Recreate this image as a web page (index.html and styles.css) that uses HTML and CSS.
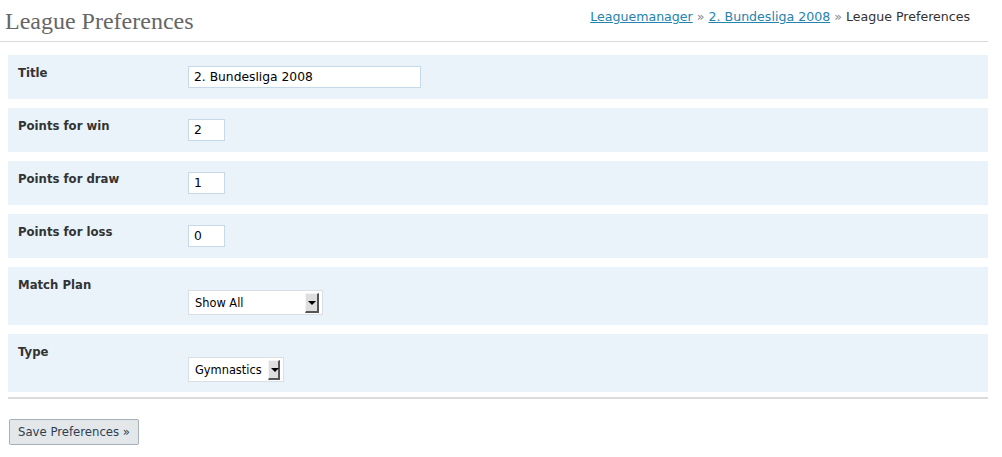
FILE: index.html
```html
<!DOCTYPE html>
<html>
<head>
<meta charset="utf-8">
<link rel="stylesheet" href="styles.css">
</head>
<body>
<div class="wrap">
  <div class="header">
    <h2 class="title">League Preferences</h2>
    <p class="crumbs"><a href="#">Leaguemanager</a> <span class="sep">»</span> <a href="#">2. Bundesliga 2008</a> <span class="sep">»</span> League Preferences</p>
  </div>
  <div class="form">
    <div class="row">
      <div class="label">Title</div>
      <div class="field"><input class="text wide" type="text" value="2. Bundesliga 2008"></div>
    </div>
    <div class="row">
      <div class="label">Points for win</div>
      <div class="field"><input class="text small" type="text" value="2"></div>
    </div>
    <div class="row">
      <div class="label">Points for draw</div>
      <div class="field"><input class="text small" type="text" value="1"></div>
    </div>
    <div class="row">
      <div class="label">Points for loss</div>
      <div class="field"><input class="text small" type="text" value="0"></div>
    </div>
    <div class="row">
      <div class="label">Match Plan</div>
      <div class="field"><div class="select plan"><span class="val">Show All</span><span class="arrow"></span></div></div>
    </div>
    <div class="row">
      <div class="label">Type</div>
      <div class="field"><div class="select type"><span class="val">Gymnastics</span><span class="arrow"></span></div></div>
    </div>
  </div>
  <div class="submit">
    <button class="btn" type="button">Save Preferences »</button>
  </div>
</div>
</body>
</html>
```
FILE: styles.css
```css
* { box-sizing: border-box; }
body {
  margin: 0;
  background: #fff;
  font-family: "DejaVu Sans", Verdana, sans-serif;
  color: #333;
}
.wrap { width: 990px; }
.header {
  display: flex;
  justify-content: space-between;
  align-items: center;
  height: 42px;
  border-bottom: 1px solid #dadada;
  padding: 0 18px 0 5px;
  margin-right: 2px;
}
.title {
  margin: 0;
  font-family: "Liberation Serif", "Times New Roman", serif;
  font-weight: normal;
  font-size: 24px;
  color: #666;
  padding-top: 1px;
}
.crumbs {
  margin: 0;
  font-size: 12.6px;
  color: #333;
  padding-bottom: 8px;
}
.crumbs a { color: #2583ad; }
.sep { color: #888; }
.form {
  display: flex;
  flex-direction: column;
  gap: 9px;
  margin: 13px 2px 0 8px;
  padding-bottom: 5px;
  border-bottom: 2px solid #dcdcdc;
}
.row {
  display: grid;
  grid-template-columns: 180px 1fr;
  background: #eaf3fa;
  padding: 10px 0;
}
.label {
  padding-left: 10px;
  padding-top: 1px;
  font-weight: bold;
  font-size: 11.7px;
  color: #333;
  line-height: 14px;
}
.field { min-height: 24px; }
.text {
  display: block;
  margin-top: 1px;
  height: 22px;
  border: 1px solid #c6d9e9;
  background: #fff;
  font-family: "DejaVu Sans", Verdana, sans-serif;
  font-size: 12.3px;
  color: #000;
  padding: 2px 5px;
}
.wide { width: 233px; }
.small { width: 37px; }
.select {
  display: flex;
  align-items: center;
  justify-content: space-between;
  margin-top: 13px;
  height: 25px;
  border: 1px solid #d9dfe5;
  background: #fff;
  padding: 0 3px 0 6px;
  font-size: 11.4px;
  color: #000;
}
.plan { width: 135px; }
.type { width: 96px; }
.type .val { margin-right: 6px; }
.arrow {
  position: relative;
  width: 14px;
  height: 20px;
  background: #dedede;
  border-top: 1px solid #f4f4f4;
  border-left: 1px solid #f4f4f4;
  border-right: 2px solid #555;
  border-bottom: 2px solid #555;
}
.arrow::after {
  content: "";
  position: absolute;
  left: 2px;
  top: 7px;
  border-left: 4px solid transparent;
  border-right: 4px solid transparent;
  border-top: 4px solid #000;
}
.submit { padding: 20px 0 0 9px; }
.btn {
  height: 26px;
  width: 130px;
  border: 1px solid #a7b0b8;
  border-radius: 2px;
  background: #e3e7ea;
  font-family: "DejaVu Sans", Verdana, sans-serif;
  font-size: 11.7px;
  color: #2e3e4e;
  padding: 0 8px;
  text-align: left;
}
```
